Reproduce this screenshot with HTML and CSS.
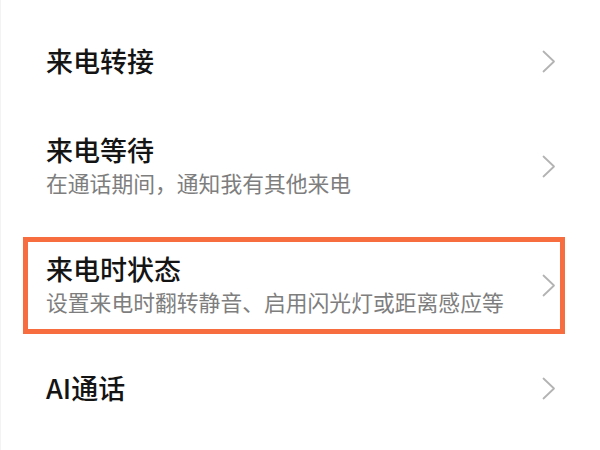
FILE: index.html
```html
<!DOCTYPE html>
<html lang="zh-CN">
<head>
<meta charset="utf-8">
<link rel="stylesheet" href="styles.css">
</head>
<body>
<div class="list">
  <div class="row single">
    <div class="text"><div class="title">来电转接</div></div>
    <svg class="chev" viewBox="0 0 14 23" width="14" height="23"><polyline points="1.5,1.5 12,11.5 1.5,21.5"/></svg>
  </div>
  <div class="row double">
    <div class="text">
      <div class="title">来电等待</div>
      <div class="sub">在通话期间，通知我有其他来电</div>
    </div>
    <svg class="chev" viewBox="0 0 14 23" width="14" height="23"><polyline points="1.5,1.5 12,11.5 1.5,21.5"/></svg>
  </div>
  <div class="row-hl">
    <div class="box">
      <div class="text">
        <div class="title">来电时状态</div>
        <div class="sub">设置来电时翻转静音、启用闪光灯或距离感应等</div>
      </div>
      <svg class="chev" viewBox="0 0 14 23" width="14" height="23"><polyline points="1.5,1.5 12,11.5 1.5,21.5"/></svg>
    </div>
  </div>
  <div class="row single">
    <div class="text"><div class="title">AI通话</div></div>
    <svg class="chev" viewBox="0 0 14 23" width="14" height="23"><polyline points="1.5,1.5 12,11.5 1.5,21.5"/></svg>
  </div>
</div>
</body>
</html>
```

FILE: styles.css
```css
html, body {
  margin: 0;
  padding: 0;
  background: #ffffff;
}
body {
  width: 600px;
  height: 450px;
  overflow: hidden;
  font-family: "Noto Sans CJK SC", "Noto Sans", sans-serif;
  border-left: 1px solid #f3f3f3;
  box-sizing: border-box;
}
.list {
  padding-top: 16px;
}
.row {
  display: flex;
  align-items: center;
  padding: 0 44px 0 45px;
}
.row.single { height: 91px; }
.row.double { height: 118px; }
.text {
  flex: 1;
  display: flex;
  flex-direction: column;
}
.title {
  font-size: 27px;
  line-height: 34px;
  font-weight: 500;
  color: #141414;
  margin-top: -2px;
}
.sub {
  font-size: 21.8px;
  line-height: 31px;
  color: #7e7e7e;
}
.chev {
  flex: none;
  fill: none;
  stroke: #b3b3b3;
  stroke-width: 1.8;
  stroke-linecap: round;
  stroke-linejoin: round;
}
.row-hl {
  height: 118px;
  box-sizing: border-box;
  padding: 12px 35px 9px 22px;
}
.box {
  height: 97px;
  box-sizing: border-box;
  border: 5px solid #f76d3f;
  display: flex;
  align-items: center;
  padding: 0 4px 0 18px;
}
```
